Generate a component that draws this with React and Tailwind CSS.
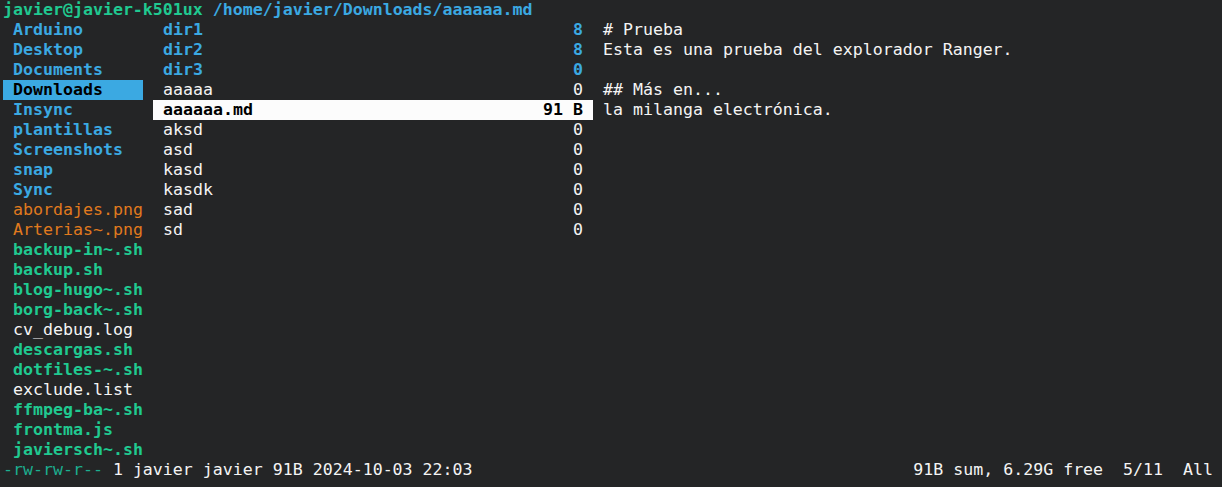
const parentItems = [
  { name: 'Arduino', kind: 'dir' },
  { name: 'Desktop', kind: 'dir' },
  { name: 'Documents', kind: 'dir' },
  { name: 'Downloads', kind: 'dir', selected: true },
  { name: 'Insync', kind: 'dir' },
  { name: 'plantillas', kind: 'dir' },
  { name: 'Screenshots', kind: 'dir' },
  { name: 'snap', kind: 'dir' },
  { name: 'Sync', kind: 'dir' },
  { name: 'abordajes.png', kind: 'img' },
  { name: 'Arterias~.png', kind: 'img' },
  { name: 'backup-in~.sh', kind: 'exe' },
  { name: 'backup.sh', kind: 'exe' },
  { name: 'blog-hugo~.sh', kind: 'exe' },
  { name: 'borg-back~.sh', kind: 'exe' },
  { name: 'cv_debug.log', kind: 'file' },
  { name: 'descargas.sh', kind: 'exe' },
  { name: 'dotfiles-~.sh', kind: 'exe' },
  { name: 'exclude.list', kind: 'file' },
  { name: 'ffmpeg-ba~.sh', kind: 'exe' },
  { name: 'frontma.js', kind: 'exe' },
  { name: 'javiersch~.sh', kind: 'exe' },
]

const currentItems = [
  { name: 'dir1', size: '8', kind: 'dir' },
  { name: 'dir2', size: '8', kind: 'dir' },
  { name: 'dir3', size: '0', kind: 'dir' },
  { name: 'aaaaa', size: '0', kind: 'file' },
  { name: 'aaaaaa.md', size: '91 B', kind: 'file', selected: true },
  { name: 'aksd', size: '0', kind: 'file' },
  { name: 'asd', size: '0', kind: 'file' },
  { name: 'kasd', size: '0', kind: 'file' },
  { name: 'kasdk', size: '0', kind: 'file' },
  { name: 'sad', size: '0', kind: 'file' },
  { name: 'sd', size: '0', kind: 'file' },
]

const preview = [
  '# Prueba',
  'Esta es una prueba del explorador Ranger.',
  '',
  '## Más en...',
  'la milanga electrónica.',
]

function kindClass(kind) {
  if (kind === 'dir') return 'font-bold text-[#3ba9e2]'
  if (kind === 'exe') return 'font-bold text-[#20c990]'
  if (kind === 'img') return 'text-[#e07a1e]'
  return 'text-[#f4f4f4]'
}

export default function App() {
  return (
    <div
      className="w-[1222px] h-[487px] bg-[#242526] text-[#f4f4f4] text-[16.6px] leading-[20px] whitespace-pre overflow-hidden flex flex-col"
      style={{ fontFamily: '"DejaVu Sans Mono", "Liberation Mono", monospace' }}
    >
      {/* title bar */}
      <div className="h-[20px] pl-[3px] font-bold">
        <span className="text-[#20c990]">javier@javier-k501ux</span>
        <span className="text-[#3ba9e2]"> /home/javier/Downloads/aaaaaa.md</span>
      </div>

      {/* columns */}
      <div className="flex-1 flex pl-[3px] gap-[10px]">
        <div className="w-[140px] flex flex-col">
          {parentItems.map((it) => (
            <div
              key={it.name}
              className={`h-[20px] pl-[10px] ${
                it.selected ? 'bg-[#3ba9e2] text-black font-bold' : kindClass(it.kind)
              }`}
            >
              {it.name}
            </div>
          ))}
        </div>

        <div className="w-[440px] flex flex-col">
          {currentItems.map((it) => (
            <div
              key={it.name}
              className={`h-[20px] px-[10px] flex justify-between ${
                it.selected ? 'bg-[#fcfcfc] text-black font-bold' : kindClass(it.kind)
              }`}
            >
              <span>{it.name}</span>
              <span>{it.size}</span>
            </div>
          ))}
        </div>

        <div className="flex-1 flex flex-col">
          {preview.map((line, i) => (
            <div key={i} className="h-[20px]">{line}</div>
          ))}
        </div>
      </div>

      {/* status bar */}
      <div className="h-[20px] mb-[7px] pl-[3px] pr-[9px] flex justify-between">
        <span>
          <span className="text-[#1cae90]">-rw-rw-r--</span> 1 javier javier 91B 2024-10-03 22:03
        </span>
        <span>91B sum, 6.29G free  5/11  All</span>
      </div>
    </div>
  )
}
